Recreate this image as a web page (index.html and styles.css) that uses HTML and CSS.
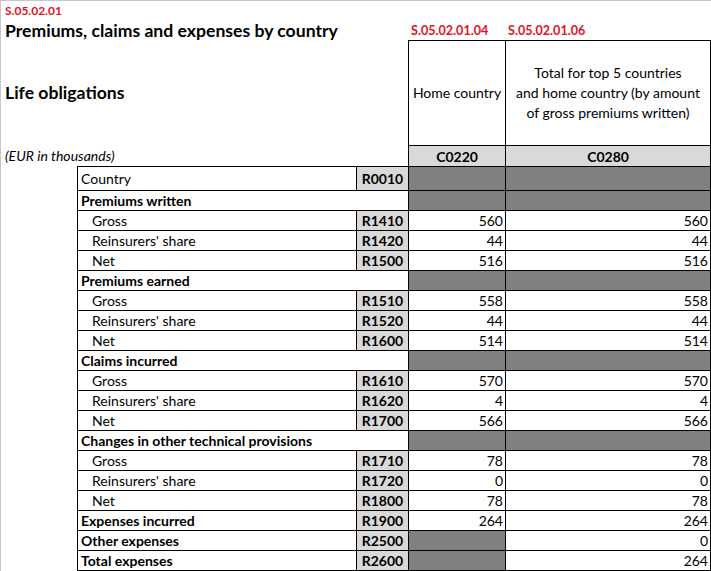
FILE: index.html
```html
<!DOCTYPE html>
<html>
<head>
<meta charset="utf-8">
<link rel="stylesheet" href="styles.css">
</head>
<body>
<div class="sheet">
  <div class="free ref r-a">S.05.02.01</div>
  <div class="free title r-b">Premiums, claims and expenses by country</div>
  <div class="colref c4 r-b">S.05.02.01.04</div>
  <div class="colref c5 r-b">S.05.02.01.06</div>
  <div class="free title r-c sub">Life obligations</div>
  <div class="hd c4 r-c">Home country</div>
  <div class="hd c5 r-c">Total for top 5 countries<br>and home country (by amount<br>of gross premiums written)</div>
  <div class="free unit r-d">(EUR in thousands)</div>
  <div class="colcode c4 r-d">C0220</div>
  <div class="colcode c5 r-d">C0280</div>

  <div class="lab">Country</div><div class="code">R0010</div><div class="v c4 dark"></div><div class="v c5 dark"></div>
  <div class="lab sec">Premiums written</div><div class="v c4 dark"></div><div class="v c5 dark"></div>
  <div class="lab ind">Gross</div><div class="code">R1410</div><div class="v c4">560</div><div class="v c5">560</div>
  <div class="lab ind">Reinsurers' share</div><div class="code">R1420</div><div class="v c4">44</div><div class="v c5">44</div>
  <div class="lab ind">Net</div><div class="code">R1500</div><div class="v c4">516</div><div class="v c5">516</div>
  <div class="lab sec">Premiums earned</div><div class="v c4 dark"></div><div class="v c5 dark"></div>
  <div class="lab ind">Gross</div><div class="code">R1510</div><div class="v c4">558</div><div class="v c5">558</div>
  <div class="lab ind">Reinsurers' share</div><div class="code">R1520</div><div class="v c4">44</div><div class="v c5">44</div>
  <div class="lab ind">Net</div><div class="code">R1600</div><div class="v c4">514</div><div class="v c5">514</div>
  <div class="lab sec">Claims incurred</div><div class="v c4 dark"></div><div class="v c5 dark"></div>
  <div class="lab ind">Gross</div><div class="code">R1610</div><div class="v c4">570</div><div class="v c5">570</div>
  <div class="lab ind">Reinsurers' share</div><div class="code">R1620</div><div class="v c4">4</div><div class="v c5">4</div>
  <div class="lab ind">Net</div><div class="code">R1700</div><div class="v c4">566</div><div class="v c5">566</div>
  <div class="lab sec">Changes in other technical provisions</div><div class="v c4 dark"></div><div class="v c5 dark"></div>
  <div class="lab ind">Gross</div><div class="code">R1710</div><div class="v c4">78</div><div class="v c5">78</div>
  <div class="lab ind">Reinsurers' share</div><div class="code">R1720</div><div class="v c4">0</div><div class="v c5">0</div>
  <div class="lab ind">Net</div><div class="code">R1800</div><div class="v c4">78</div><div class="v c5">78</div>
  <div class="lab bold">Expenses incurred</div><div class="code">R1900</div><div class="v c4">264</div><div class="v c5">264</div>
  <div class="lab bold">Other expenses</div><div class="code">R2500</div><div class="v c4 dark"></div><div class="v c5">0</div>
  <div class="lab bold last">Total expenses</div><div class="code last">R2600</div><div class="v c4 dark last"></div><div class="v c5 last">264</div>
</div>
</body>
</html>
```

FILE: styles.css
```css
html, body {
  margin: 0;
  padding: 0;
  background: #ffffff;
}

.sheet {
  width: 710px;
  height: 570px;
  border-top: 1px solid #c8c8c8;
  border-left: 1px solid #c8c8c8;
  display: grid;
  grid-template-columns: 76px 279px 52px 97px 206px;
  grid-template-rows: 19px 20px 105px 21px 24px repeat(18, 20px) 21px;
  font-family: "Lato", "Liberation Sans", sans-serif;
  font-size: 14px;
  color: #000;
  overflow: hidden;
}

.free {
  grid-column: 1 / 4;
  padding-left: 4px;
  display: flex;
  align-items: center;
  white-space: nowrap;
}

.r-a { grid-row: 1; }
.r-b { grid-row: 2; }
.r-c { grid-row: 3; }
.r-d { grid-row: 4; }

.ref {
  color: #e0141e;
  font-weight: bold;
  font-size: 12px;
}

.title {
  font-weight: bold;
  font-size: 17.6px;
}

.unit {
  font-style: italic;
}

.c4 { grid-column: 4; }
.c5 { grid-column: 5; }

.colref {
  color: #e0141e;
  font-weight: bold;
  font-size: 12.6px;
  padding-left: 3px;
  display: flex;
  align-items: center;
  white-space: nowrap;
}

.hd {
  border-top: 1px solid #000;
  border-left: 1px solid #000;
  display: flex;
  align-items: center;
  justify-content: center;
  text-align: center;
  line-height: 20px;
}

.hd.c5,
.colcode.c5,
.v.c5 {
  border-right: 1px solid #000;
}

.colcode {
  border-top: 1px solid #000;
  border-left: 1px solid #000;
  background: #d9d9d9;
  font-weight: bold;
  display: flex;
  align-items: center;
  justify-content: center;
}

.lab {
  grid-column: 2;
  border-top: 1px solid #000;
  border-left: 1px solid #000;
  padding-left: 3px;
  display: flex;
  align-items: center;
  white-space: nowrap;
}

.lab.sec {
  grid-column: 2 / 4;
  font-weight: bold;
}

.lab.bold {
  font-weight: bold;
}

.lab.ind {
  padding-left: 14px;
}

.code {
  grid-column: 3;
  border-top: 1px solid #000;
  border-left: 1px solid #000;
  background: #d9d9d9;
  font-weight: bold;
  display: flex;
  align-items: center;
  justify-content: center;
}

.v {
  border-top: 1px solid #000;
  border-left: 1px solid #000;
  display: flex;
  align-items: center;
  justify-content: flex-end;
  padding-right: 2px;
}

.v.dark {
  background: #808080;
}

.last {
  border-bottom: 1px solid #000;
}
```
